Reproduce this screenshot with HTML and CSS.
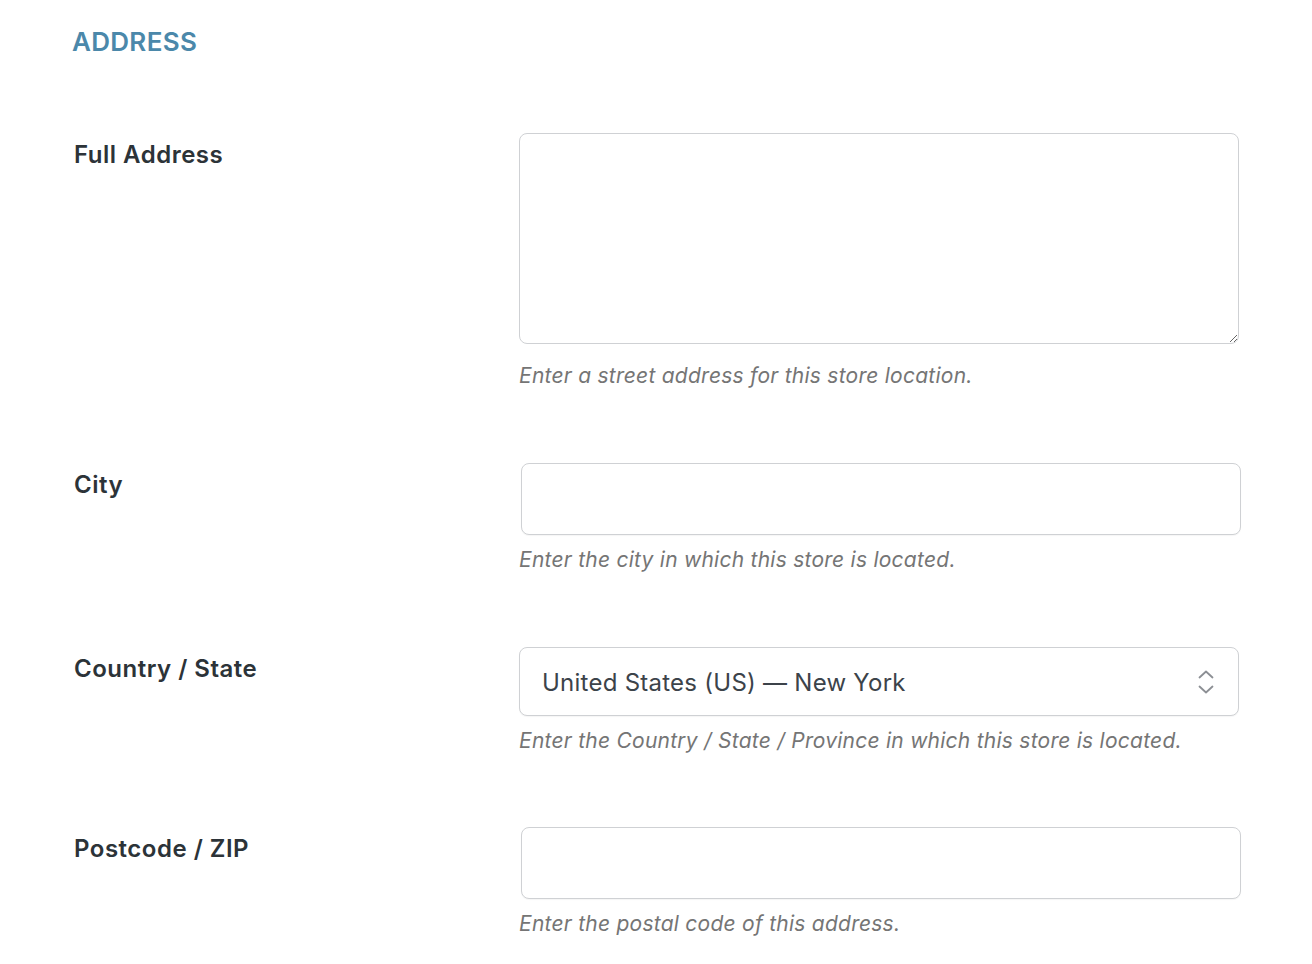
FILE: index.html
```html
<!DOCTYPE html>
<html lang="en">
<head>
<meta charset="utf-8">
<title>Address</title>
<link rel="stylesheet" href="styles.css">
</head>
<body>
<div class="page">
  <h2 class="section-title">ADDRESS</h2>
  <div class="form">
    <div class="row">
      <label class="label" for="addr">Full Address</label>
      <div class="field">
        <textarea id="addr" class="textarea"></textarea>
        <p class="help help-ta">Enter a street address for this store location.</p>
      </div>
    </div>
    <div class="row">
      <label class="label" for="city">City</label>
      <div class="field shifted">
        <input id="city" class="input" type="text">
        <p class="help">Enter the city in which this store is located.</p>
      </div>
    </div>
    <div class="row">
      <label class="label" for="country">Country / State</label>
      <div class="field">
        <div class="select" id="country">
          <span class="select-value">United States (US) — New York</span>
          <svg class="select-arrow" width="18" height="28" viewBox="0 0 18 28" aria-hidden="true">
            <path d="M2.5 9.5 L9 3.5 L15.5 9.5" fill="none" stroke="#8c8f94" stroke-width="1.8" stroke-linecap="round" stroke-linejoin="round"/>
            <path d="M2.5 18.5 L9 24.5 L15.5 18.5" fill="none" stroke="#8c8f94" stroke-width="1.8" stroke-linecap="round" stroke-linejoin="round"/>
          </svg>
        </div>
        <p class="help help-select">Enter the Country / State / Province in which this store is located.</p>
      </div>
    </div>
    <div class="row">
      <label class="label" for="zip">Postcode / ZIP</label>
      <div class="field shifted">
        <input id="zip" class="input" type="text">
        <p class="help">Enter the postal code of this address.</p>
      </div>
    </div>
  </div>
</div>
</body>
</html>
```
FILE: styles.css
```css
* { box-sizing: border-box; }
html, body { margin: 0; padding: 0; background: #ffffff; }
body {
  font-family: Inter, "Noto Sans", "Liberation Sans", sans-serif;
  color: #2c3338;
}
.page {
  padding: 26px 0 0 72px;
  width: 1312px;
}
.section-title {
  margin: 0;
  font-size: 26px;
  line-height: 32px;
  font-weight: 600;
  color: #4b88aa;
  letter-spacing: 0.3px;
}
.form {
  margin-top: 75px;
  display: flex;
  flex-direction: column;
  gap: 72px;
}
.row {
  display: grid;
  grid-template-columns: 447px 720px;
  align-items: start;
}
.label {
  padding-left: 2px;
  margin-top: 7px;
  font-size: 24px;
  line-height: 30px;
  font-weight: 600;
  color: #2c3338;
  letter-spacing: 0.5px;
}
.field { display: flex; flex-direction: column; }
.field.shifted { margin-left: 2px; }
.textarea {
  display: block;
  width: 720px;
  height: 211px;
  border: 1px solid #cfd1d4;
  border-radius: 8px;
  background: #fff;
  resize: vertical;
  margin: 0;
  outline: none;
  font: inherit;
}
.input {
  display: block;
  width: 720px;
  height: 72px;
  border: 1px solid #cfd1d4;
  border-radius: 8px;
  background: #fff;
  margin: 0;
  outline: none;
  font: inherit;
  box-shadow: 0 1px 1px rgba(0,0,0,0.04);
}
.select {
  display: flex;
  align-items: center;
  justify-content: space-between;
  width: 720px;
  height: 69px;
  border: 1px solid #cfd1d4;
  border-radius: 8px;
  background: #fff;
  padding: 0 23px 0 22px;
  box-shadow: 0 1px 1px rgba(0,0,0,0.04);
}
.select-value {
  font-size: 24px;
  color: #3c434a;
  letter-spacing: 0.25px;
  padding-top: 1px;
}
.help {
  margin: 10px 0 0 0;
  font-size: 21px;
  line-height: 30px;
  font-style: italic;
  color: #757575;
  letter-spacing: 0.25px;
}
.field.shifted .help { margin-left: -2px; }
.help-ta { margin-top: 17px; }
.help-select { line-height: 29px; padding-top: 1px; margin-top: 9px; }
```
